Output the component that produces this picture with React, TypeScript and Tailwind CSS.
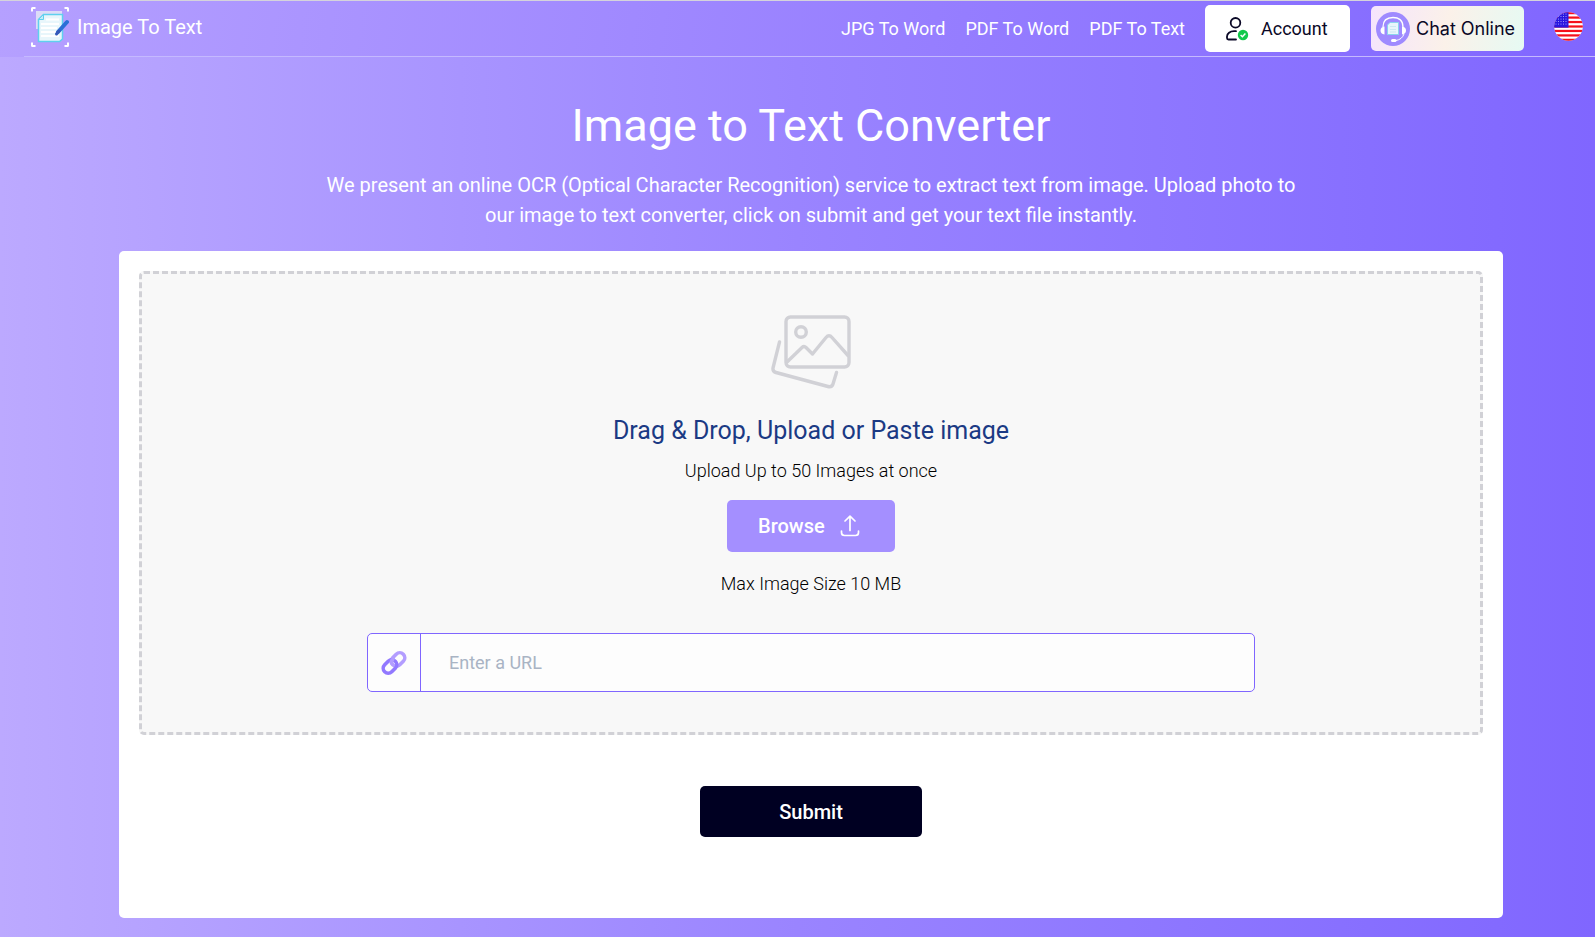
import type React from "react"

const navLinks = [
  { label: "JPG To Word", href: "#jpg-to-word" },
  { label: "PDF To Word", href: "#pdf-to-word" },
  { label: "PDF To Text", href: "#pdf-to-text" },
]

const LogoIcon: React.FC = () => (
  <svg viewBox="0 0 38 40" className="h-10 w-[38px] shrink-0" fill="none" aria-hidden="true">
    <path d="M1 4.5V1.5Q1 1 1.500 1H4.500M33.500 1H36.500Q37 1 37 1.500V4.500M1 35.500V38.500Q1 39 1.500 39H4.500M33.500 39H36.500Q37 39 37 38.500V35.500" stroke="#fff" strokeWidth="2" />
    <path d="M5 4H31V9H10V22H5Z" fill="#dcdcf7" />
    <path d="M12.500 7.500H31.500V32L28.500 34.500H7.500V12.500Z" fill="#e8f6fb" stroke="#5fd0ee" strokeWidth="1.500" />
    <path d="M12.500 7.500V12.500H7.500Z" fill="#c5eaf7" stroke="#5fd0ee" />
    <path d="M15 12.500H28M10 17H28M10 21H26M10 25H27M10 29H28" stroke="#fff" strokeWidth="2" />
    <path d="M27 25L36 15" stroke="#2b6fd6" strokeWidth="4" strokeLinecap="round" />
    <path d="M25.500 27L28 24" stroke="#3558b8" strokeWidth="3" strokeLinecap="round" />
  </svg>
)

const AccountIcon: React.FC = () => (
  <svg viewBox="0 0 24 24" className="size-6 shrink-0" fill="none" aria-hidden="true">
    <circle cx="10.500" cy="5.800" r="4.800" stroke="#0a0826" strokeWidth="1.800" />
    <path d="M11 14.200H9C5 14.200 2 16.500 2 19.500V21Q2 22.500 3.500 22.500H11" stroke="#0a0826" strokeWidth="1.800" strokeLinecap="round" />
    <circle cx="18" cy="18" r="5.200" fill="#12c94b" />
    <path d="M15.600 18L17.400 19.700L20.400 16.600" stroke="#fff" strokeWidth="1.500" />
  </svg>
)

const ChatIcon: React.FC = () => (
  <svg viewBox="0 0 34 34" className="size-[34px] shrink-0" fill="none" aria-hidden="true">
    <circle cx="17" cy="17" r="17" fill="#9f8aff" />
    <path d="M7 15C7 8 11.500 5.500 17 5.500S27 8 27 15" stroke="#fff" strokeWidth="1.300" />
    <path d="M8.500 14.500Q4.500 15 4.500 18.500T8.500 22.500ZM26 14.500Q30 15 30 18.500T26 22.500Z" fill="#fff" />
    <path d="M14 10.500H22.500V22.500H11.500V13Z" fill="#e8f6fb" stroke="#8bd3ed" />
    <path d="M14 14.500H20M14 17.500H20M14 20H20" stroke="#cbe8f2" />
    <path d="M28 22Q26 27.500 20 28.500" stroke="#fff" />
    <rect x="15" y="27" width="5.500" height="3" rx="1.500" fill="#fff" />
  </svg>
)

const stripes = [0, 1, 2, 3, 4, 5, 6]
const starRows = [2, 4.5, 7, 9.5, 12]
const starColumns = [2, 4.5, 7, 9.5, 12]

const FlagIcon: React.FC = () => (
  <svg viewBox="0 0 29 29" className="size-[29px]" aria-hidden="true">
    <clipPath id="flag-circle">
      <circle cx="14.500" cy="14.500" r="14.300" />
    </clipPath>
    <g clipPath="url(#flag-circle)">
      <rect width="29" height="29" fill="#fff" />
      {stripes.map((i) => (
        <rect key={i} y={i * 4.46} width="29" height="2.230" fill="#f5101c" />
      ))}
      <rect width="14.500" height="15.600" fill="#2a16e0" />
      {starRows.map((y) => starColumns.map((x) => <circle key={`${x}-${y}`} cx={x} cy={y} r="0.500" fill="#c9c6ff" />))}
    </g>
  </svg>
)

const ImagesIcon: React.FC = () => (
  <svg viewBox="0 0 80 74" className="h-[74px] w-20" fill="none" stroke="#d1d1d6" strokeWidth="3.400" strokeLinecap="round" strokeLinejoin="round" aria-hidden="true">
    <rect x="15" y="2" width="63" height="50" rx="4.500" />
    <circle cx="30" cy="17" r="5.300" />
    <path d="M16 47L31 32.500Q33 30.500 35 32.500L41.500 39L55 22.500Q58 19 61 22.500L77 40.500" />
    <path d="M8.500 27L2 53Q1.500 56.500 5 57.500L57 71.500Q61 72.500 62 69L65.500 57.500" />
  </svg>
)

const UploadIcon: React.FC = () => (
  <svg viewBox="0 0 20 22" className="h-[22px] w-5" fill="none" stroke="#fff" strokeWidth="1.700" strokeLinecap="round" strokeLinejoin="round" aria-hidden="true">
    <path d="M10 15.500V1.500M5 6L10 1.200L15 6" />
    <path d="M1.500 16V17.500Q1.500 20.500 4.500 20.500H15.500Q18.500 20.500 18.500 17.500V16" />
  </svg>
)

const LinkIcon: React.FC = () => (
  <svg viewBox="0 0 26 26" className="size-[26px]" fill="none" strokeWidth="3.600" aria-hidden="true">
    <rect x="9.500" y="4.500" width="15" height="10" rx="5" stroke="#b39dff" transform="rotate(-45 17 9.500)" />
    <rect x="1.500" y="11.500" width="15" height="10" rx="5" stroke="#9279ff" transform="rotate(-45 9 16.500)" />
    <path d="M11 13.500Q9.500 11.500 12 9" stroke="#b39dff" strokeLinecap="round" />
  </svg>
)

const Header: React.FC = () => (
  <header className="border-t border-t-[#d5d3dc] bg-linear-[97deg] from-[#b5a0ff] to-[#8066ff]">
    <div className="ml-6 flex h-14 items-center border-b border-[#c5b9ff] pr-3 pl-[7px]">
      <a href="#home" className="mb-1 flex items-center gap-2 text-xl text-white">
        <LogoIcon />
        Image To Text
      </a>
      <nav className="ml-auto flex items-center gap-5 text-lg text-white">
        {navLinks.map((link) => (
          <a key={link.href} href={link.href}>
            {link.label}
          </a>
        ))}
        <a href="#account" className="flex h-[47px] w-[145px] items-center gap-3 rounded-[5px] bg-white pl-5 text-[#0a0826]">
          <AccountIcon />
          Account
        </a>
      </nav>
      <button type="button" className="ml-[21px] flex h-[45px] w-[153px] items-center gap-[6px] rounded-[5px] bg-linear-[100deg] from-[#f5e4fd] via-[#fbf1e9] to-[#e6faf3] pl-[5px] font-['Inter',sans-serif] text-lg whitespace-nowrap text-[#0a0826]">
        <ChatIcon />
        Chat Online
      </button>
      <button type="button" aria-label="English" className="mb-1 ml-[30px]">
        <FlagIcon />
      </button>
    </div>
  </header>
)

const UploadCard: React.FC = () => (
  <form className="mx-auto mt-[21px] flex max-w-[1384px] flex-col items-center rounded-[5px] bg-white px-5 pt-5 pb-[81px]" onSubmit={(e) => e.preventDefault()}>
    <div className="flex w-full flex-col items-center rounded-[5px] border-3 border-dashed border-[#d1d1d6] bg-[#f8f8f8] pt-[41px] pb-10">
      <ImagesIcon />
      <h2 className="mt-6 text-[25px] leading-9 text-[#1b3a84]">Drag &amp; Drop, Upload or Paste image</h2>
      <p className="mt-2 text-lg leading-7 font-light text-black">Upload Up to 50 Images at once</p>
      <button type="button" className="mt-[15px] flex h-[52px] w-[168px] items-center gap-[15px] rounded-[5px] bg-[#a48fff] pl-[31px] text-xl font-medium text-white">
        Browse
        <UploadIcon />
      </button>
      <p className="mt-[18px] text-lg leading-7 font-light text-black">Max Image Size 10 MB</p>
      <div className="mt-[35px] flex h-[59px] w-2/3 max-w-[888px] rounded-[5px] border border-[#8066ff] bg-[#fdfdfd]">
        <label htmlFor="image-url" aria-label="Image URL" className="flex w-[53px] items-center justify-center border-r border-[#8066ff]">
          <LinkIcon />
        </label>
        <input id="image-url" type="url" placeholder="Enter a URL" className="min-w-0 flex-1 px-7 text-lg outline-none placeholder:text-[#a9b4c4]" />
      </div>
    </div>
    <button type="submit" className="mt-[51px] h-[51px] w-[222px] rounded-[5px] bg-[#000022] text-xl font-medium text-white">
      Submit
    </button>
  </form>
)

const App: React.FC = () => {
  return (
    <div className="min-h-screen bg-linear-to-r from-[#bca9ff] via-[#9a84ff] to-[#8066ff] font-['Roboto','Liberation_Sans',sans-serif]">
      <Header />
      <main className="pt-10 pb-[19px] pl-[27px]">
        <h1 className="text-center text-[45px] leading-[58px] text-white">Image to Text Converter</h1>
        <p className="mx-auto mt-[15px] max-w-[1000px] text-center text-xl leading-[30px] text-white">
          We present an online OCR (Optical Character Recognition) service to extract text from image. Upload photo to
          our image to text converter, click on submit and get your text file instantly.
        </p>
        <UploadCard />
      </main>
    </div>
  )
}

export default App
